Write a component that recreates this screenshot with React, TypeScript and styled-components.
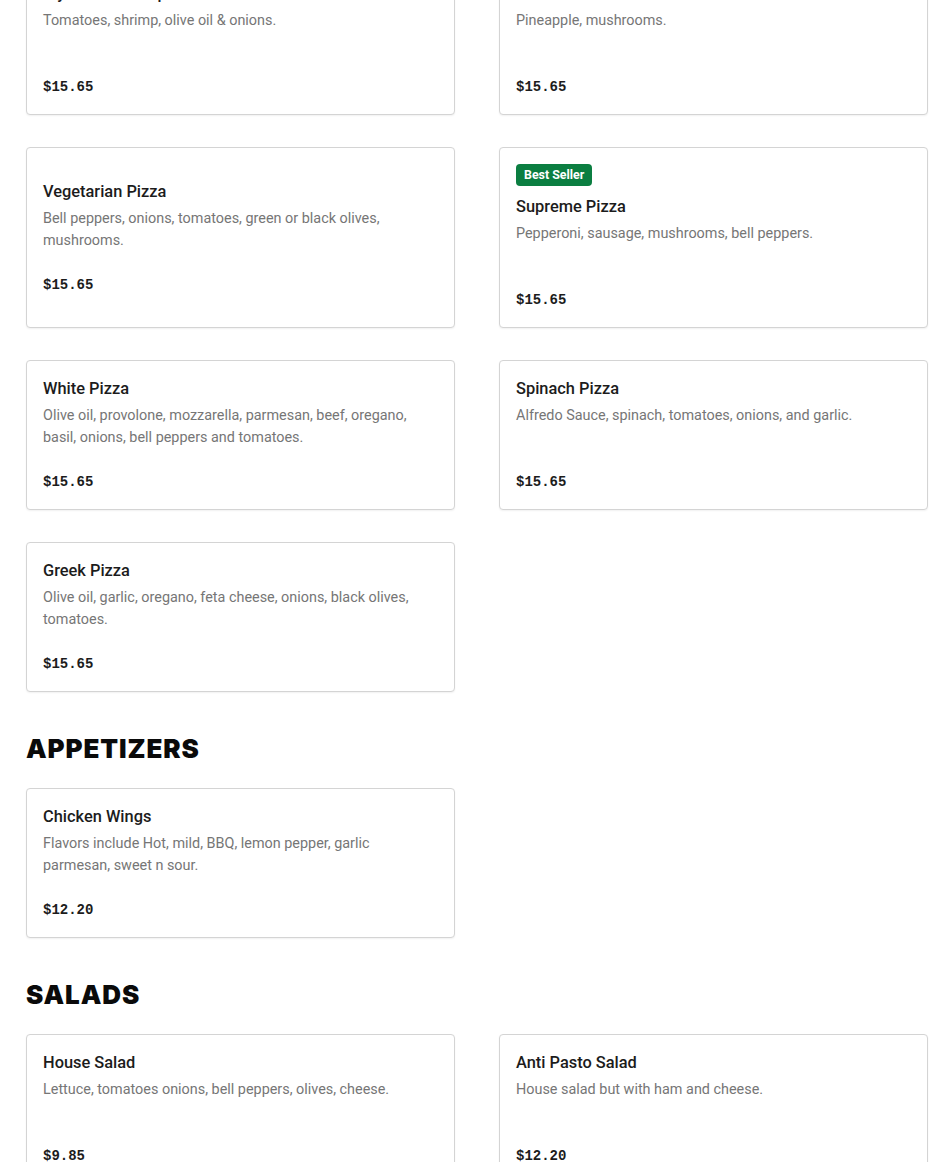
import React from "react";
import styled, { createGlobalStyle } from "styled-components";

const GlobalStyle = createGlobalStyle`
  html, body {
    margin: 0;
    padding: 0;
    background: #ffffff;
    overflow: hidden;
  }
  body {
    font-family: "Roboto", "Liberation Sans", sans-serif;
    -webkit-font-smoothing: antialiased;
  }
`;

const Page = styled.main`
  padding: 0 22px 0 26px;
  margin-top: -35px;
`;

const Section = styled.section`
  display: flex;
  flex-direction: column;
`;

const SectionTitle = styled.h2`
  margin: 41px 0 23px;
  font-family: "Inter", "Liberation Sans", sans-serif;
  font-weight: 900;
  font-size: 26px;
  line-height: 32px;
  letter-spacing: 0.9px;
  color: #0a0a0a;
  text-transform: uppercase;
`;

const Grid = styled.div`
  display: grid;
  grid-template-columns: repeat(2, 1fr);
  column-gap: 44px;
  row-gap: 32px;
`;

const Card = styled.article`
  display: flex;
  flex-direction: column;
  justify-content: center;
  padding: 16px;
  border: 1px solid #d4d4d4;
  border-radius: 4px;
  background: #fff;
  box-shadow: 0 1px 2px rgba(0, 0, 0, 0.06);
`;

const Badge = styled.span`
  align-self: flex-start;
  height: 22px;
  line-height: 22px;
  padding: 0 8px;
  margin-bottom: 9px;
  border-radius: 4px;
  background: #0b7e41;
  color: #fff;
  font-family: "Roboto", "Liberation Sans", sans-serif;
  font-weight: 700;
  font-size: 12.4px;
`;

const ItemName = styled.h3`
  margin: 0 0 4px;
  font-family: "Roboto", "Liberation Sans", sans-serif;
  font-weight: 500;
  font-size: 16.4px;
  line-height: 24px;
  color: #1c1c1c;
`;

const Description = styled.p`
  margin: 0;
  min-height: 44px;
  max-width: 380px;
  font-size: 14.4px;
  line-height: 22px;
  color: #767676;
`;

const Price = styled.div`
  margin-top: 22px;
  font-family: "Liberation Mono", "DejaVu Sans Mono", monospace;
  font-weight: 700;
  font-size: 14px;
  line-height: 22px;
  color: #1c1c1c;
`;

type Item = { name: string; desc: string; price: string; badge?: string };
type Category = { title?: string; items: Item[] };

const menu: Category[] = [
  {
    items: [
      { name: "Mykonos Shrimp Pizza", desc: "Tomatoes, shrimp, olive oil & onions.", price: "$15.65" },
      { name: "Hawaiian Pizza", desc: "Pineapple, mushrooms.", price: "$15.65" },
      {
        name: "Vegetarian Pizza",
        desc: "Bell peppers, onions, tomatoes, green or black olives, mushrooms.",
        price: "$15.65",
      },
      {
        name: "Supreme Pizza",
        desc: "Pepperoni, sausage, mushrooms, bell peppers.",
        price: "$15.65",
        badge: "Best Seller",
      },
      {
        name: "White Pizza",
        desc: "Olive oil, provolone, mozzarella, parmesan, beef, oregano, basil, onions, bell peppers and tomatoes.",
        price: "$15.65",
      },
      {
        name: "Spinach Pizza",
        desc: "Alfredo Sauce, spinach, tomatoes, onions, and garlic.",
        price: "$15.65",
      },
      {
        name: "Greek Pizza",
        desc: "Olive oil, garlic, oregano, feta cheese, onions, black olives, tomatoes.",
        price: "$15.65",
      },
    ],
  },
  {
    title: "Appetizers",
    items: [
      {
        name: "Chicken Wings",
        desc: "Flavors include Hot, mild, BBQ, lemon pepper, garlic parmesan, sweet n sour.",
        price: "$12.20",
      },
    ],
  },
  {
    title: "Salads",
    items: [
      { name: "House Salad", desc: "Lettuce, tomatoes onions, bell peppers, olives, cheese.", price: "$9.85" },
      { name: "Anti Pasto Salad", desc: "House salad but with ham and cheese.", price: "$12.20" },
    ],
  },
];

export default function App() {
  return (
    <>
      <GlobalStyle />
      <Page>
        {menu.map((cat, i) => (
          <Section key={i}>
            {cat.title && <SectionTitle>{cat.title}</SectionTitle>}
            <Grid>
              {cat.items.map((item) => (
                <Card key={item.name}>
                  {item.badge && <Badge>{item.badge}</Badge>}
                  <ItemName>{item.name}</ItemName>
                  <Description>{item.desc}</Description>
                  <Price>{item.price}</Price>
                </Card>
              ))}
            </Grid>
          </Section>
        ))}
      </Page>
    </>
  );
}
